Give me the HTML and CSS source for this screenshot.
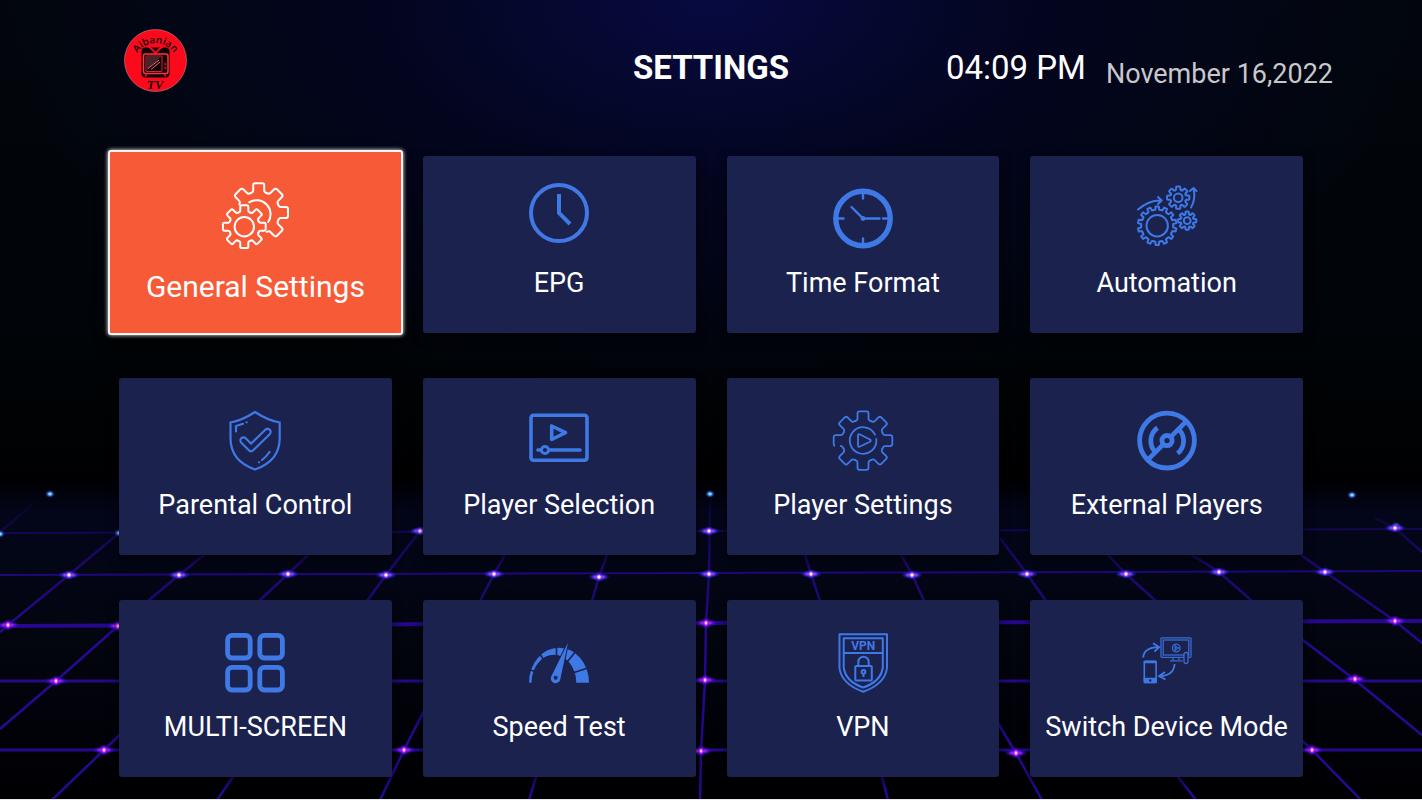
FILE: index.html
```
<!DOCTYPE html>
<html lang="en">
	<head>
		<meta charset="utf-8">
		<title>Settings</title>
		<link rel="stylesheet" href="styles.css">
	</head>
	<body>
		<svg class="backdrop" viewBox="0 0 1422 800" preserveAspectRatio="none" aria-hidden="true">
			<defs>
				<radialGradient id="spark">
					<stop offset="0" stop-color="#fff"/>
					<stop offset=".18" stop-color="#ffc4ff"/>
					<stop offset=".36" stop-color="#e21bea"/>
					<stop offset=".6" stop-color="#4a12e0" stop-opacity=".75"/>
					<stop offset="1" stop-color="#2a08b0" stop-opacity="0"/>
				</radialGradient>
				<radialGradient id="frost">
					<stop offset="0" stop-color="#fff"/>
					<stop offset=".25" stop-color="#f3dcff"/>
					<stop offset=".42" stop-color="#b43cf0"/>
					<stop offset=".65" stop-color="#2a2ae0" stop-opacity=".7"/>
					<stop offset="1" stop-color="#1420b0" stop-opacity="0"/>
				</radialGradient>
				<radialGradient id="star">
					<stop offset="0" stop-color="#fff"/>
					<stop offset=".35" stop-color="#4b9cff"/>
					<stop offset="1" stop-color="#0a2a90" stop-opacity="0"/>
				</radialGradient>
				<linearGradient id="fade" gradientUnits="userSpaceOnUse" x1="0" y1="495" x2="0" y2="640">
					<stop offset="0" stop-color="#22087e" stop-opacity="0"/>
					<stop offset=".4" stop-color="#22087e" stop-opacity=".75"/>
					<stop offset="1" stop-color="#270893"/>
				</linearGradient>
				<g id="p">
					<ellipse rx="12" ry="4" fill="url(#spark)"/>
					<ellipse rx="5" ry="6" fill="url(#spark)"/>
				</g>
				<g id="w">
					<ellipse rx="11" ry="4" fill="url(#frost)"/>
					<ellipse rx="5" ry="5" fill="url(#frost)"/>
				</g>
				<ellipse id="b" rx="5" ry="4" fill="url(#star)"/>
			</defs>
			<g fill="none" stroke="#25088c">
				<path stroke-width="2" opacity=".5" d="M0 533L711 531L1422 529"/>
				<path stroke-width="2" opacity=".85" d="M0 575L711 573L1422 571"/>
				<path stroke-width="4" d="M0 626L711 623L1422 621"/>
				<path stroke-width="3" d="M0 681H1422"/>
				<path stroke-width="3" d="M0 750H1422"/>
			</g>
			<g fill="none" stroke="url(#fade)" stroke-width="2.5">
				<path d="M32 505L0 532"/>
				<path d="M119 533L69 575L8 625L0 632"/>
				<path d="M204 555L179 575L118 626L56 681L0 729"/>
				<path d="M308 555L288 574L259 601L104 750L52 800"/>
				<path d="M420 531L386 575L367 601L233 777L217 800"/>
				<path d="M505 555L494 574L480 601L404 750L380 800"/>
				<path d="M607 555L599 577L592 601L536 777L529 800"/>
				<path d="M710 494L709 574L706 623L705 681L701 751L700 800"/>
				<path d="M805 555L811 574L820 601L882 777L888 800"/>
				<path d="M901 555L912 574L924 601L1016 753L1042 800"/>
				<path d="M1000 538L1027 574L1046 601L1178 777L1196 800"/>
				<path d="M1108 555L1126 574L1156 601L1312 750L1361 800"/>
				<path d="M1192 555L1219 572L1252 601L1355 680L1422 735"/>
				<path d="M1301 555L1325 572L1395 621L1422 643"/>
				<path d="M1375 518L1395 528L1422 552"/>
			</g>
			<g>
				<use href="#b" x="50" y="494"/><use href="#b" x="710" y="494"/><use href="#b" x="1352" y="495"/>
				<use href="#b" x="0" y="534"/><use href="#b" x="119" y="533"/><use href="#b" x="1396" y="526"/>
				<use href="#w" x="420" y="531"/><use href="#w" x="709" y="531"/><use href="#w" x="1395" y="528"/>
				<use href="#w" x="69" y="575"/><use href="#w" x="179" y="575"/><use href="#w" x="288" y="574"/>
				<use href="#w" x="386" y="575"/><use href="#w" x="494" y="574"/><use href="#w" x="599" y="577"/>
				<use href="#w" x="709" y="574"/><use href="#w" x="811" y="574"/><use href="#w" x="912" y="575"/>
				<use href="#w" x="1027" y="574"/><use href="#w" x="1126" y="574"/><use href="#w" x="1219" y="572"/>
				<use href="#w" x="1325" y="572"/>
				<use href="#p" x="8" y="625"/><use href="#p" x="118" y="626"/><use href="#p" x="706" y="623"/>
				<use href="#p" x="1395" y="621"/>
				<use href="#p" x="56" y="681"/><use href="#p" x="705" y="680"/><use href="#p" x="1355" y="679"/>
				<use href="#p" x="104" y="750"/><use href="#p" x="404" y="750"/><use href="#p" x="701" y="751"/>
				<use href="#p" x="1016" y="753"/><use href="#p" x="1312" y="750"/>
			</g>
		</svg>

		<svg class="defs" width="0" height="0" aria-hidden="true">
			<defs>
				<!-- one eighth of a cog, turned into place below -->
				<path id="tooth" vector-effect="non-scaling-stroke" d="M-8-19.4L-6.8-20Q-5.5-20.5-5.5-22V-27Q-5.5-29.3-3.5-29.3H3.5Q5.5-29.3 5.5-27V-22Q5.5-20.5 6.8-20L8-19.4"/>
				<g id="cog">
					<use href="#tooth"/>
					<use href="#tooth" transform="rotate(45)"/>
					<use href="#tooth" transform="rotate(90)"/>
					<use href="#tooth" transform="rotate(135)"/>
					<use href="#tooth" transform="rotate(180)"/>
					<use href="#tooth" transform="rotate(225)"/>
					<use href="#tooth" transform="rotate(270)"/>
					<use href="#tooth" transform="rotate(315)"/>
				</g>
				<path id="fine" d="M-3.56-15.6L-1.9-16L-1.6-19.3H1.6L1.9-16L3.56-15.6"/>
				<g id="half">
					<use href="#fine"/>
					<use href="#fine" transform="rotate(25.714)"/>
					<use href="#fine" transform="rotate(51.429)"/>
					<use href="#fine" transform="rotate(77.143)"/>
					<use href="#fine" transform="rotate(102.857)"/>
					<use href="#fine" transform="rotate(128.571)"/>
					<use href="#fine" transform="rotate(154.286)"/>
				</g>
			</defs>
		</svg>

		<header class="topbar">
			<svg class="logo" viewBox="0 0 63 63" role="img" aria-label="Albanian TV">
				<defs><path id="arc" d="M9.8 34A21.8 21.8 0 0 1 53.2 34"/></defs>
				<circle cx="31.5" cy="31.5" r="31" fill="#fb0a1c" stroke="#c9808c" stroke-width=".6"/>
				<text class="logo-name"><textPath href="#arc" startOffset="50%" text-anchor="middle">Albanian</textPath></text>
				<rect x="17.5" y="18.500" width="28" height="30" rx="4" fill="#120308"/>
				<path d="M25 17.500l6.500 6.500 6.500-6.500" fill="none" stroke="#fb0a1c" stroke-width="1.8"/>
				<circle cx="25" cy="17.8" r="1.2" fill="#fb0a1c"/>
				<circle cx="38" cy="17.8" r="1.2" fill="#fb0a1c"/>
				<rect x="19.500" y="25" width="24.500" height="19.500" rx="2" fill="none" stroke="#fb3540" stroke-width="1.5"/>
				<rect x="22" y="27" width="16" height="15.500" rx="1" fill="#100408" stroke="#d92330"/>
				<path d="M22.500 27.500h15l-15 14z" fill="#45242a"/>
				<path d="M24 39.500l11-8.500M27 40.500l9-7.500" stroke="#f06a62" stroke-width="1"/>
				<circle cx="41.300" cy="35" r="1.100" fill="#fb0a1c"/>
				<circle cx="41.300" cy="39" r="1.100" fill="#fb0a1c"/>
				<path d="M23 45l-2 2.500M40 45l2 2.500" stroke="#fb0a1c" stroke-width="1.5"/>
				<text class="logo-tv" x="31" y="60" text-anchor="middle">TV</text>
			</svg>
			<h1 class="title">SETTINGS</h1>
			<div class="clock">
				<span class="time">04:09 PM</span>
				<span class="date">November 16,2022</span>
			</div>
		</header>

		<main class="tiles">
			<button type="button" class="tile focused">
				<svg class="icon" viewBox="0 0 67 67">
					<g fill="none" stroke="#fff" stroke-width="2" stroke-linecap="round">
						<use href="#cog" transform="translate(22.3 44.7) scale(.73)"/>
						<circle cx="22.3" cy="44.7" r="9.7"/>
						<g transform="translate(36.7 30.5)">
							<use href="#tooth" transform="rotate(-45)"/>
							<use href="#tooth"/>
							<use href="#tooth" transform="rotate(45)"/>
							<use href="#tooth" transform="rotate(90)"/>
							<use href="#tooth" transform="rotate(135)"/>
							<path d="M-9.5-10.2A14 14 0 0 1 9.5 9.5"/>
						</g>
					</g>
				</svg>
				<span class="label">General Settings</span>
			</button>

			<button type="button" class="tile">
				<svg class="icon" viewBox="0 0 60 60">
					<g fill="none" stroke="currentColor" stroke-width="4">
						<circle cx="30" cy="25" r="28"/>
						<path d="M30 6V25L41 36"/>
					</g>
				</svg>
				<span class="label">EPG</span>
			</button>

			<button type="button" class="tile">
				<svg class="icon" viewBox="0 0 60 60">
					<g fill="none" stroke="currentColor" stroke-width="2.4" stroke-linecap="round">
						<circle cx="30" cy="30.5" r="27.2" stroke-width="5.4"/>
						<path d="M30 5v5.500M30 50.500v5M5 30.500h5.500M50 30.500h5M30 30.500L18.500 19M30 30.500H46.500"/>
					</g>
					<circle cx="30" cy="30.5" r="2.4" fill="currentColor"/>
				</svg>
				<span class="label">Time Format</span>
			</button>

			<button type="button" class="tile">
				<svg class="icon" viewBox="0 0 60 60">
					<g fill="none" stroke="currentColor" stroke-width="2" stroke-linecap="round" stroke-linejoin="round">
						<g transform="translate(20.2 37.7)">
							<use href="#half"/>
							<use href="#half" transform="rotate(180)"/>
							<circle r="10.7"/>
						</g>
						<use href="#cog" transform="translate(41.2 9.7) scale(.38)"/>
						<circle cx="41.2" cy="9.7" r="4.3"/>
						<use href="#cog" transform="translate(50.2 32.7) scale(.31)"/>
						<circle cx="50.2" cy="32.7" r="3.4"/>
						<path d="M1 21.500Q12 12 24.500 12.500M21 9l3.700 3.500-3.700 3.500"/>
						<path d="M54 19.500Q59 11 56.500.5M52.800 3l3.700-3 3 3"/>
					</g>
				</svg>
				<span class="label">Automation</span>
			</button>

			<button type="button" class="tile">
				<svg class="icon" viewBox="0 0 60 60">
					<g fill="none" stroke="currentColor" stroke-width="2.2" stroke-linecap="round">
						<path d="M30 2Q43 10.500 54.700 12.500V28Q54.700 51 30 59.500Q5.500 51 5.500 28V12.500Q17 10.500 30 2z"/>
						<path stroke-width="8.400" stroke-linejoin="round" d="M18.500 30.500L26 38L42.500 22"/>
						<path class="cut" stroke-width="4" stroke-linejoin="round" d="M18.500 30.500L26 38L42.500 22"/>
						<path d="M11 21.500V16L18 13.800M21.500 12.300h.1M44.500 42Q41.500 46.500 37 50M34 52.300h.1"/>
					</g>
				</svg>
				<span class="label">Parental Control</span>
			</button>

			<button type="button" class="tile">
				<svg class="icon" viewBox="0 0 60 60">
					<g fill="none" stroke="currentColor" stroke-width="3.6" stroke-linejoin="round">
						<rect x="2" y="5.3" width="56" height="45" rx="2.5"/>
						<path d="M22.700 16V29.500L36.500 22.700z"/>
						<path stroke-linecap="round" d="M9 40H51"/>
						<circle class="knob" cx="16" cy="40" r="3.6" stroke-width="3"/>
					</g>
				</svg>
				<span class="label">Player Selection</span>
			</button>

			<button type="button" class="tile">
				<svg class="icon" viewBox="0 0 60 60">
					<g fill="none" stroke="currentColor" stroke-width="1.8" stroke-linejoin="round" stroke-linecap="round">
						<use href="#cog" transform="translate(30 30.600)"/>
						<path d="M42 24.600A13.300 13.300 0 1 0 43.300 29"/>
						<path d="M25 25.500Q25 23.500 27 24.500L37 29.500Q38.500 30.600 37 31.700L27 36.500Q25 37.500 25 35.500z"/>
					</g>
					<path class="cut" stroke-width="3.4" d="M2 36.200H7"/>
				</svg>
				<span class="label">Player Settings</span>
			</button>

			<button type="button" class="tile">
				<svg class="icon" viewBox="0 0 60 60">
					<g fill="none" stroke="currentColor" stroke-width="4.8">
						<circle cx="30" cy="30.6" r="27.4"/>
						<circle cx="30" cy="30.6" r="5.1"/>
						<path d="M49 11.600L34 26.600M26 34.600L11 49.600"/>
						<path d="M20.500 17.800A16 16 0 0 0 18 41.600"/>
						<path d="M42 19.600A16 16 0 0 1 40.500 43.400"/>
					</g>
				</svg>
				<span class="label">External Players</span>
			</button>

			<button type="button" class="tile">
				<svg class="icon" viewBox="0 0 60 60">
					<g fill="none" stroke="currentColor" stroke-width="4.8">
						<rect x="2.6" y="3.4" width="22.6" height="22.6" rx="4.5"/>
						<rect x="34.8" y="3.4" width="22.6" height="22.6" rx="4.5"/>
						<rect x="2.6" y="35.400" width="22.6" height="22.6" rx="4.5"/>
						<rect x="34.8" y="35.400" width="22.6" height="22.6" rx="4.5"/>
					</g>
				</svg>
				<span class="label">MULTI-SCREEN</span>
			</button>

			<button type="button" class="tile">
				<svg class="icon" viewBox="0 -1 60 60">
					<path fill="currentColor" d="M0 49.700A30 35 0 0 1 60 49.700H47.300A22.400 28 0 0 0 2.500 49.700z"/>
					<path class="cut" stroke-width="1.6" d="M0 36.500L6 38.500M10 20L15 27M27.500 13V25M47 18L38.500 28.500M59 35L45 39.500"/>
					<path class="hand" d="M39 9.700L22.300 43.200A4.800 4.800 0 1 0 31.300 46.200z"/>
					<circle class="hole" cx="26.700" cy="44.700" r="2"/>
				</svg>
				<span class="label">Speed Test</span>
			</button>

			<button type="button" class="tile">
				<svg class="icon" viewBox="0 -1 60 60">
					<g fill="none" stroke="currentColor" stroke-width="2" stroke-linejoin="round">
						<path d="M6.500 1.300H54V35Q52 51 30.200 58.800Q8.500 51 6.500 35z"/>
						<path d="M10.700 5.300H49.800V34.500Q48 48.500 30.200 54.500Q12.500 48.500 10.700 34.500z"/>
						<path d="M10.700 20H49.800"/>
						<rect x="22.3" y="33" width="16.500" height="14.500" rx="1"/>
						<path d="M25.300 33V29A5.200 5.200 0 0 1 35.700 29V33"/>
						<circle cx="30.500" cy="38.800" r="1.900"/>
						<path d="M30.500 40.500V44"/>
					</g>
					<text class="vpn" x="30.200" y="17" text-anchor="middle">VPN</text>
				</svg>
				<span class="label">VPN</span>
			</button>

			<button type="button" class="tile">
				<svg class="icon" viewBox="0 -1 60 60">
					<g fill="none" stroke="currentColor" stroke-width="1.300">
						<g opacity=".85">
							<rect x="24" y="4.800" width="30" height="19.500" rx=".8"/>
							<rect x="26.200" y="7" width="25.600" height="15"/>
							<circle cx="39.200" cy="15" r="3.800"/>
							<path d="M38 13v4l3.200-2zM36 24.500v2.500M42 24.500v2.500M33 27.800H45.500"/>
							<rect class="knob" x="47" y="19.500" width="4" height="11" rx="2"/>
						</g>
						<path stroke-width="1.800" d="M6.200 24.500Q7 14.500 21.500 14.200M16 10.200L22.200 14.200L17.500 18.500"/>
						<path stroke-width="1.800" d="M37.600 31Q37 42.500 22.500 43.200M28 39L22 43.200L28.500 46.500"/>
						<rect x="7.300" y="28.200" width="11.800" height="21.300" rx="1.500" stroke-width="1.600"/>
						<path fill="currentColor" d="M7.300 45.500h11.800v4H7.300zM7.300 28.500h11.800v1.200H7.300z"/>
					</g>
					<circle class="hole" cx="13.200" cy="47.500" r="1.200"/>
				</svg>
				<span class="label">Switch Device Mode</span>
			</button>
		</main>
	</body>
</html>
```
FILE: styles.css
```
* {
	box-sizing: border-box;
}

body {
	margin: 0;
	min-height: 100vh;
	border-bottom: 1px solid #e8e8e8;
	background:
		radial-gradient(ellipse 50% 50% at 50% 0, #070a40 0, rgba(4, 5, 38, .75) 45%, rgba(0, 0, 10, 0) 100%),
		linear-gradient(#02060c 0, #01050a 35%, #000203 55%, #000002 60%, #03061a 64%, #03050f 80%, #000003 100%);
	font-family: Roboto, sans-serif;
	color: #fff;
}

.backdrop {
	position: absolute;
	top: 0;
	left: 0;
	width: 100%;
	height: 100%;
	z-index: -1;
}

.defs {
	position: absolute;
}

.topbar {
	display: grid;
	grid-template-columns: 1fr auto 1fr;
	align-items: end;
	padding: 29px 89px 0;
}

.logo {
	width: 63px;
	height: 63px;
	margin-left: 35px;
	overflow: visible;
}

.logo-name {
	font: 600 10px "Open Sans", sans-serif;
	fill: #120308;
}

.logo-tv {
	font: italic 700 13px "Liberation Serif", serif;
	fill: #120308;
}

.title {
	margin: 0;
	font-size: 33px;
	font-weight: 700;
	line-height: 48px;
}

.clock {
	display: flex;
	justify-content: flex-end;
	align-items: center;
	gap: 20px;
	line-height: 48px;
	white-space: nowrap;
}

.time {
	font-size: 33px;
}

.date {
	padding-top: 12px;
	font-size: 27px;
	line-height: 36px;
	color: #c8c8cc;
}

.tiles {
	display: grid;
	grid-template-columns: repeat(4, 1fr);
	grid-auto-rows: minmax(177px, auto);
	gap: 45px 31px;
	padding: 64px 119px 22px;
}

.tile {
	display: flex;
	flex-direction: column;
	align-items: center;
	gap: 19px;
	padding: 32px 0 0;
	border: 0;
	border-radius: 3px;
	background: #1b224e;
	box-shadow: 0 4px 12px rgba(0, 0, 0, .6);
	color: #3f79e6;
	font-family: inherit;
	cursor: pointer;
}

.icon {
	width: 60px;
	height: 60px;
	overflow: visible;
}

.label {
	font-size: 27px;
	line-height: 32px;
	color: #fff;
	white-space: nowrap;
}

/* the selected tile grows past its cell */
.focused {
	margin: -6px -11px -2px;
	padding-top: 30px;
	border: 2px solid #f4f4f4;
	background: #f75a36;
	box-shadow: 0 0 4px #fff, 0 8px 14px rgba(0, 0, 0, .6);
}

.focused .icon {
	width: 67px;
	height: 67px;
}

.focused .label {
	margin-top: 3px;
	font-size: 30px;
}

/* strokes and fills in the tile colour, for gaps in the icons */
.cut {
	stroke: #1b224e;
}

.knob,
.hole {
	fill: #1b224e;
}

.hand {
	fill: currentColor;
	stroke: #1b224e;
	stroke-width: 2;
	paint-order: stroke;
}

.vpn {
	font: 700 12px Roboto, sans-serif;
	fill: currentColor;
}
```
